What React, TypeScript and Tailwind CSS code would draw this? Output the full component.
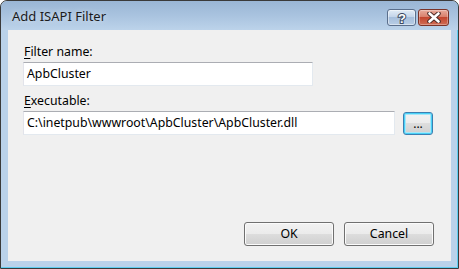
import React from "react";

const btn =
  "flex items-center justify-center rounded-[3px] border border-[#707070] bg-[linear-gradient(to_bottom,#f2f2f2_0%,#ebebeb_50%,#dddddd_50%,#cfcfcf_100%)] shadow-[inset_0_0_0_1px_#fbfbfb] text-[12.3px] leading-[16px] text-black";

export default function App() {
  return (
    <div
      className="w-[459px] h-[269px] bg-white"
      style={{ fontFamily: '"Noto Sans", "Open Sans", sans-serif' }}
    >
      <div className="w-[459px] h-[269px] flex flex-col rounded-t-[7px] border border-[#3a3a3a] bg-[#bad2ea] shadow-[inset_-1px_-1px_0_#5fcdf0] overflow-hidden">
        {/* title bar */}
        <div className="h-[29px] shrink-0 flex items-start justify-between bg-[linear-gradient(to_bottom,#9ab6d5_0%,#a9c3df_50%,#bcd3ea_100%)] pl-[11px] pr-[9px] rounded-t-[6px]">
          <span className="mt-[7px] text-[13px] leading-[16px] text-[#1b1b1b] [text-shadow:0_0_6px_rgba(255,255,255,0.7)]">
            Add ISAPI Filter
          </span>
          <div className="flex gap-[2px] mt-[8px]">
            <div className="w-[29px] h-[17px] rounded-[3px] border border-[#5b6f8c] bg-[linear-gradient(to_bottom,#e2ecf6_0%,#c3d5ea_45%,#a6bfdc_50%,#b8cde5_100%)] shadow-[inset_0_0_0_1px_rgba(255,255,255,0.45)] flex items-center justify-center">
              <svg width="12" height="14" viewBox="0 0 12 14">
                <text
                  x="6"
                  y="12"
                  textAnchor="middle"
                  fontSize="13"
                  fontWeight="bold"
                  fontFamily="Liberation Sans, sans-serif"
                  fill="#ffffff"
                  stroke="#3b4a60"
                  strokeWidth="2"
                  paintOrder="stroke"
                >
                  ?
                </text>
              </svg>
            </div>
            <div className="w-[31px] h-[17px] rounded-[3px] border border-[#7a3328] bg-[linear-gradient(to_bottom,#e8ab9c_0%,#d9806c_45%,#c3462f_50%,#cf6d55_100%)] shadow-[inset_0_0_0_1px_rgba(255,255,255,0.3)] flex items-center justify-center">
              <svg width="14" height="11" viewBox="0 0 14 11">
                <path
                  d="M2.5 1.5 L11.5 9.5 M11.5 1.5 L2.5 9.5"
                  stroke="#4a2a26"
                  strokeWidth="4.5"
                  strokeLinecap="round"
                />
                <path
                  d="M2.5 1.5 L11.5 9.5 M11.5 1.5 L2.5 9.5"
                  stroke="#ffffff"
                  strokeWidth="2.6"
                  strokeLinecap="round"
                />
              </svg>
            </div>
          </div>
        </div>
        {/* frame + client */}
        <div className="flex-1 flex px-[7px] pb-[7px]">
          <div className="flex-1 flex flex-col bg-[#f0f0f0] pl-[15px] pr-[17px] pt-[14px] pb-[15px]">
            <div className="pl-[1px] text-[12.3px] leading-[16px] text-black">
              <u className="underline-offset-[2px]">F</u>ilter name:
            </div>
            <div className="mt-[2px] w-[290px] h-[24px] flex items-center bg-white border border-[#e3e9ef] border-t-[#abadb3] border-l-[#e2e3ea] pl-[3px] text-[12.3px] leading-[16px] text-black">
              ApbCluster
            </div>
            <div className="mt-[7px] pl-[1px] text-[12.3px] leading-[16px] text-black">
              <u className="underline-offset-[2px]">E</u>xecutable:
            </div>
            <div className="mt-[2px] flex items-start gap-[8px]">
              <div className="w-[372px] h-[24px] flex items-center bg-white border border-[#e3e9ef] border-t-[#abadb3] border-l-[#e2e3ea] pl-[3px] text-[12.3px] leading-[16px] text-black whitespace-nowrap overflow-hidden">
                C:\inetpub\wwwroot\ApbCluster\ApbCluster.dll
              </div>
              <div className="mt-[1px] w-[30px] h-[23px] flex items-center justify-center rounded-[3px] border border-[#3c7fb1] bg-[linear-gradient(to_bottom,#f2f2f2_0%,#ebebeb_50%,#dddddd_50%,#cfcfcf_100%)] shadow-[inset_0_0_0_1px_#48d1f7,inset_0_0_0_2px_#a8e6f8] text-[12px] leading-[16px] text-black">
                ...
              </div>
            </div>
            <div className="flex-1" />
            <div className="flex justify-end gap-[10px]">
              <div className={`${btn} w-[90px] h-[24px]`}>OK</div>
              <div className={`${btn} w-[90px] h-[24px]`}>Cancel</div>
            </div>
          </div>
        </div>
      </div>
    </div>
  );
}
